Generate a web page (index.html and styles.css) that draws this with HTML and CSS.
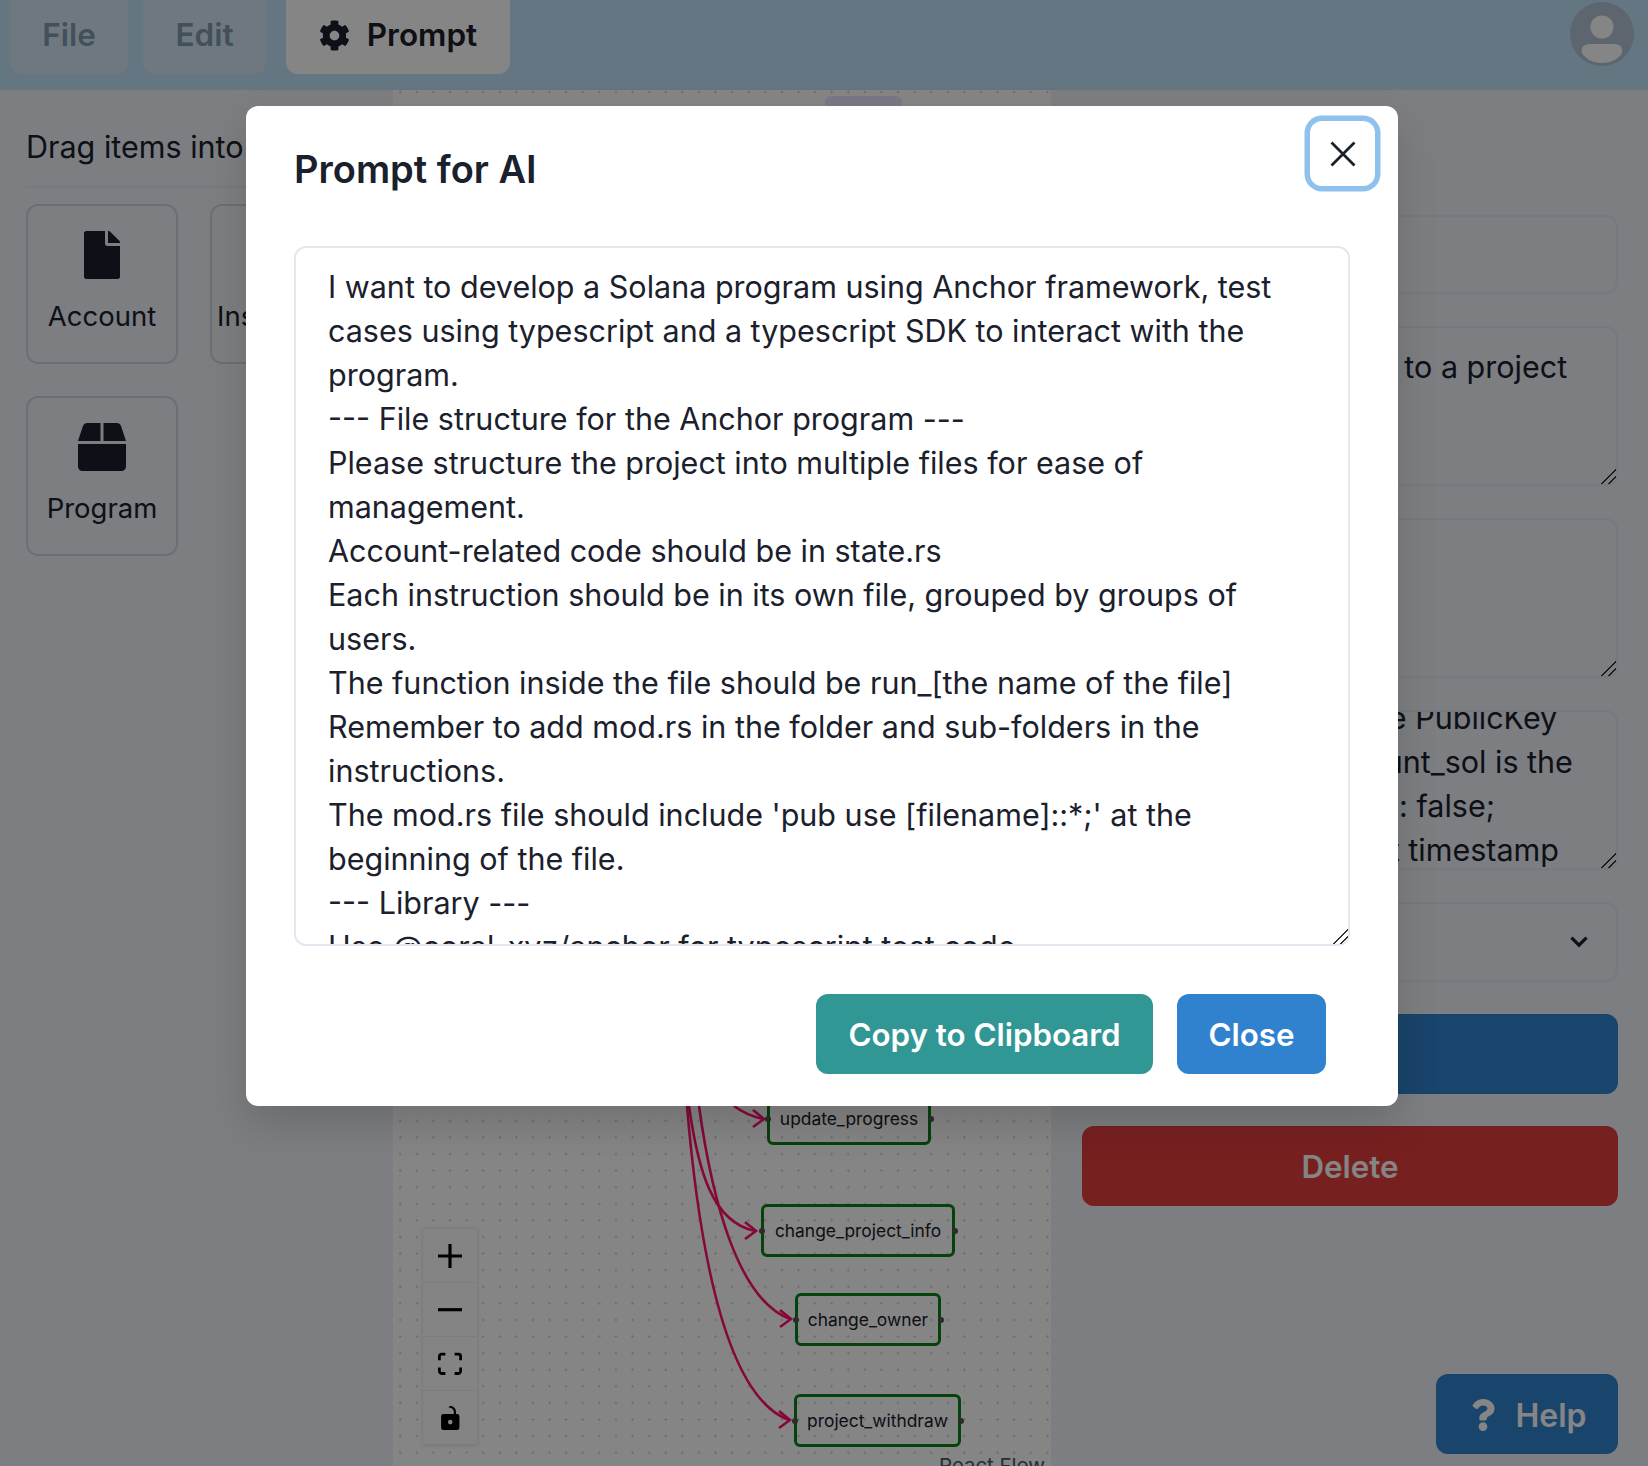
FILE: index.html
```html
<!DOCTYPE html>
<html lang="en">

<head>
  <meta charset="UTF-8">
  <meta name="viewport" content="width=device-width, initial-scale=1.0">
  <title>Prompt for AI</title>
  <link rel="stylesheet" href="styles.css">
</head>

<body>
  <div class="page">
    <header class="navbar">
      <div class="tabs">
        <div class="tab tab-file">File</div>
        <div class="tab tab-edit">Edit</div>
        <div class="tab tab-prompt">
          <svg class="cog" viewBox="0 0 512 512"><path d="M487.4 315.7l-42.6-24.6c4.3-23.2 4.3-47 0-70.2l42.6-24.6c4.9-2.8 7.1-8.6 5.5-14-11.1-35.6-30-67.8-54.7-94.6-3.8-4.1-10-5.1-14.8-2.3L380.8 110c-17.9-15.4-38.5-27.3-60.8-35.1V25.8c0-5.6-3.9-10.5-9.4-11.7-36.7-8.2-74.3-7.8-109.2 0-5.5 1.2-9.4 6.1-9.4 11.7V75c-22.2 7.9-42.8 19.8-60.8 35.1L88.7 85.5c-4.9-2.8-11-1.9-14.8 2.3-24.7 26.7-43.6 58.9-54.7 94.6-1.7 5.4.6 11.2 5.5 14L67.3 221c-4.3 23.2-4.3 47 0 70.2l-42.6 24.6c-4.9 2.8-7.1 8.6-5.5 14 11.1 35.6 30 67.8 54.7 94.6 3.8 4.1 10 5.1 14.8 2.3l42.6-24.6c17.9 15.4 38.5 27.3 60.8 35.1v49.2c0 5.6 3.9 10.5 9.4 11.7 36.7 8.2 74.3 7.8 109.2 0 5.5-1.2 9.4-6.1 9.4-11.7v-49.2c22.2-7.9 42.8-19.8 60.8-35.1l42.6 24.6c4.9 2.8 11 1.9 14.8-2.3 24.7-26.7 43.6-58.9 54.7-94.6 1.5-5.5-.7-11.3-5.6-14.1zM256 336c-44.1 0-80-35.9-80-80s35.9-80 80-80 80 35.9 80 80-35.9 80-80 80z"/></svg>
          <span>Prompt</span>
        </div>
      </div>
      <svg class="avatar" viewBox="0 0 64 64">
        <circle cx="32" cy="32" r="32" fill="#b2c3d4"/>
        <circle cx="32" cy="25" r="11.5" fill="#fff"/>
        <path d="M20 42h24c7 0 9 4 8 9-3 6-11 10-20 10s-17-4-20-10c-1-5 1-9 8-9z" fill="#fff"/>
      </svg>
    </header>

    <main class="workspace">
      <aside class="sidebar">
        <p class="sidebar-hint">Drag items into</p>
        <div class="palette">
          <div class="palette-item">
            <svg class="palette-icon icon-doc" viewBox="0 0 384 512"><path d="M224 136V0H24C10.7 0 0 10.7 0 24v464c0 13.3 10.7 24 24 24h336c13.3 0 24-10.7 24-24V160H248c-13.2 0-24-10.8-24-24zm160-14.1v6.1H256V0h6.1c6.4 0 12.5 2.5 17 7l97.9 98c4.5 4.5 7 10.6 7 16.9z"/></svg>
            <span>Account</span>
          </div>
          <div class="palette-item">
            <svg class="palette-icon icon-doc" viewBox="0 0 384 512"><path d="M224 136V0H24C10.7 0 0 10.7 0 24v464c0 13.3 10.7 24 24 24h336c13.3 0 24-10.7 24-24V160H248c-13.2 0-24-10.8-24-24z"/></svg>
            <span>Instruction</span>
          </div>
          <div class="palette-item">
            <svg class="palette-icon icon-box" viewBox="0 0 512 512"><path d="M509.5 184.6L458.9 32.8C452.4 13.2 434.1 0 413.4 0H272v192h238.7c-.4-2.5-.4-5-1.2-7.4zM240 0H98.6c-20.7 0-39 13.2-45.5 32.8L2.5 184.6c-.8 2.4-.8 4.9-1.2 7.4H240V0zM0 224v240c0 26.5 21.5 48 48 48h416c26.5 0 48-21.5 48-48V224H0z"/></svg>
            <span>Program</span>
          </div>
        </div>
      </aside>

      <section class="canvas">
        <div class="node-pill"></div>

        <svg class="edges" viewBox="393 90 658 1376">
          <g fill="none" stroke="#ff1070" stroke-width="2.6">
            <path d="M734 1106C742 1112 750 1116 763 1119"/>
            <path d="M753 1110L764 1119L753 1127"/>
            <path d="M689 1106C698 1170 712 1222 755 1231"/>
            <path d="M745 1222L756 1231L745 1239"/>
            <path d="M699 1106C712 1200 738 1300 790 1319"/>
            <path d="M780 1310L791 1319L780 1327"/>
            <path d="M687 1106C700 1260 728 1398 789 1420"/>
            <path d="M779 1411L790 1420L779 1428"/>
          </g>
        </svg>

        <div class="node node-update">update_progress</div>
        <div class="node node-info">change_project_info</div>
        <div class="node node-owner">change_owner</div>
        <div class="node node-withdraw">project_withdraw</div>

        <div class="controls">
          <div class="control"><svg class="ctl-plus" viewBox="0 0 32 32"><path d="M32 18.133H18.133V32h-4.266V18.133H0v-4.266h13.867V0h4.266v13.867H32z"/></svg></div>
          <div class="control"><svg class="ctl-minus" viewBox="0 0 32 5"><path d="M0 0h32v4.2H0z"/></svg></div>
          <div class="control"><svg class="ctl-fit" viewBox="0 0 32 30"><path d="M3.692 4.63c0-.53.4-.938.939-.938h5.215V0H4.708C2.13 0 0 2.054 0 4.63v5.216h3.692V4.63zM27.354 0h-5.2v3.692h5.17c.53 0 .984.4.984.939v5.215H32V4.631A4.624 4.624 0 0027.354 0zm.954 24.83c0 .532-.4.94-.939.94h-5.215v3.768h5.215c2.577 0 4.631-2.13 4.631-4.707v-5.139h-3.692v5.139zm-23.677.94c-.531 0-.939-.4-.939-.94v-5.138H0v5.139c0 2.577 2.13 4.707 4.708 4.707h5.138V25.77H4.631z"/></svg></div>
          <div class="control"><svg class="ctl-lock" viewBox="0 0 25 32"><path d="M21.333 10.667H19.81V7.619C19.81 3.429 16.38 0 12.19 0c-4.114 1.828-1.37 2.133.305 2.438 1.676.305 4.42 2.59 4.42 5.181v3.048H3.047A3.056 3.056 0 000 13.714v15.238A3.056 3.056 0 003.048 32h18.285a3.056 3.056 0 003.048-3.048V13.714a3.056 3.056 0 00-3.048-3.047zM12.19 24.533a3.056 3.056 0 01-3.047-3.047 3.056 3.056 0 013.047-3.048 3.056 3.056 0 013.048 3.048 3.056 3.056 0 01-3.048 3.047z"/></svg></div>
        </div>

        <div class="attribution">React Flow</div>
      </section>

      <aside class="panel">
        <div class="field field-short"></div>
        <div class="field field-area">
          <div class="area-text nowrap"><span class="line-shift">Let user contribute to a project</span></div>
        </div>
        <div class="field field-area"></div>
        <div class="field field-area">
          <div class="area-text area-scrolled">
            <div class="nowrap line-shift">Let a signer use the PublicKey</div>
            <div class="nowrap">And the value amount_sol is the</div>
            <div class="nowrap line-shift">Set flag withdrawal: false;</div>
            <div class="nowrap">Then stores current timestamp</div>
          </div>
        </div>
        <div class="field field-short field-select">
          <svg class="chevron" viewBox="0 0 24 24"><path d="M5 8l7 7 7-7" fill="none" stroke="#1a202c" stroke-width="3"/></svg>
        </div>
        <button class="btn btn-save">Save</button>
        <button class="btn btn-delete">Delete</button>
      </aside>
    </main>

    <button class="btn btn-help">
      <svg class="help-icon" viewBox="0 0 384 512"><path d="M202.021 0C122.202 0 70.503 32.703 29.914 91.026c-7.363 10.58-5.093 25.086 5.178 32.874l43.138 32.709c10.373 7.865 25.132 6.026 33.253-4.148 25.049-31.381 43.63-49.449 82.757-49.449 30.764 0 68.816 19.799 68.816 49.631 0 22.552-18.617 34.134-48.993 51.164-35.423 19.86-82.299 44.576-82.299 106.405V320c0 13.255 10.745 24 24 24h72.471c13.255 0 24-10.745 24-24v-5.773c0-42.86 125.268-44.645 125.268-160.627C377.504 66.256 286.902 0 202.021 0zM192 373.459c-38.196 0-69.271 31.075-69.271 69.271 0 38.195 31.075 69.27 69.271 69.27s69.271-31.075 69.271-69.271-31.075-69.27-69.271-69.27z"/></svg>
      <span>Help</span>
    </button>

    <div class="overlay">
      <div class="modal">
        <div class="modal-header">
          <h2 class="modal-title">Prompt for AI</h2>
          <div class="modal-close">
            <svg viewBox="0 0 26 26"><path d="M1.5 1.5L24.5 24.5M24.5 1.5L1.5 24.5" fill="none" stroke="#1a202c" stroke-width="2.8"/></svg>
          </div>
        </div>
        <textarea class="prompt-box" readonly>I want to develop a Solana program using Anchor framework, test cases using typescript and a typescript SDK to interact with the program.
--- File structure for the Anchor program ---
Please structure the project into multiple files for ease of management.
Account-related code should be in state.rs
Each instruction should be in its own file, grouped by groups of users.
The function inside the file should be run_[the name of the file]
Remember to add mod.rs in the folder and sub-folders in the instructions.
The mod.rs file should include 'pub use [filename]::*;' at the beginning of the file.
--- Library ---
Use @coral-xyz/anchor for typescript test code</textarea>
        <div class="modal-footer">
          <button class="btn btn-copy">Copy to Clipboard</button>
          <button class="btn btn-close">Close</button>
        </div>
      </div>
    </div>
  </div>
</body>

</html>
```

FILE: styles.css
```css
* {
  padding: 0;
  margin: 0;
  box-sizing: border-box;
}

body {
  font-family: Inter, "Liberation Sans", sans-serif;
  font-size: 30.5px;
  line-height: 44px;
  color: #1a202c;
  background-color: #edf2f7;
}

.page {
  position: relative;
  width: 1648px;
  height: 1466px;
  overflow: hidden;
}

/* top bar */
.navbar {
  height: 90px;
  display: flex;
  justify-content: space-between;
  padding: 0 14px 0 10px;
  background-color: #bee3f8;
  border-bottom: 1px solid #d2dce4;
}

.tabs {
  display: flex;
}

.tab {
  height: 74px;
  padding-bottom: 4px;
  display: flex;
  align-items: center;
  justify-content: center;
  font-size: 31.5px;
  font-weight: 600;
  color: #7f9aae;
  background-color: #d5e6f3;
  border-radius: 0 0 12px 12px;
}

.tab-file {
  width: 118px;
  margin-right: 15px;
}

.tab-edit {
  width: 123px;
  margin-right: 20px;
}

.tab-prompt {
  width: 224px;
  gap: 17px;
  color: #1a202c;
  background-color: #fff;
}

.cog {
  width: 31px;
  height: 31px;
  fill: #1a202c;
}

.avatar {
  width: 64px;
  height: 64px;
  margin-top: 2px;
}

/* three columns */
.workspace {
  display: flex;
  height: 1376px;
}

.sidebar {
  width: 393px;
  padding: 35px 0 0 26px;
  overflow: hidden;
}

.sidebar-hint {
  white-space: nowrap;
  padding-bottom: 17px;
  border-bottom: 2px solid #e2e8f0;
  margin-bottom: 16px;
}

.palette {
  display: grid;
  grid-template-columns: 152px 152px;
  grid-auto-rows: 160px;
  gap: 32px;
}

.palette-item {
  display: flex;
  flex-direction: column;
  align-items: center;
  border: 2px solid #cbd5e0;
  border-radius: 12px;
  font-size: 27.5px;
  line-height: 40px;
}

.palette-icon {
  fill: #1a202c;
  margin-top: 25px;
  margin-bottom: 17px;
  height: 48px;
}

.icon-doc {
  width: 36px;
}

.icon-box {
  width: 48px;
}

.canvas {
  position: relative;
  width: 658px;
  background-color: #fff;
  background-image: radial-gradient(circle, #d4d4d4 1px, transparent 1.3px);
  background-size: 16.6px 16.6px;
  background-position: 15.5px -6.3px;
  overflow: hidden;
}

.node-pill {
  position: absolute;
  left: 432px;
  top: 6px;
  width: 77px;
  height: 40px;
  background-color: #ebe7ff;
  border-radius: 6px;
}

.edges {
  position: absolute;
  left: 0;
  top: 0;
  width: 658px;
  height: 1376px;
}

.node {
  position: absolute;
  height: 53px;
  display: flex;
  align-items: center;
  justify-content: center;
  font-size: 17.4px;
  line-height: 24px;
  border: 3px solid #0a7f18;
  border-radius: 6px;
}

.node::before,
.node::after {
  content: "";
  position: absolute;
  top: 50%;
  width: 6px;
  height: 6px;
  margin-top: -3px;
  border-radius: 50%;
  background-color: #555;
}

.node::before {
  left: -5px;
}

.node::after {
  right: -6px;
}

.node-update {
  left: 374px;
  top: 1002px;
  width: 164px;
}

.node-info {
  left: 368px;
  top: 1114px;
  width: 194px;
}

.node-owner {
  left: 402px;
  top: 1203px;
  width: 146px;
}

.node-withdraw {
  left: 401px;
  top: 1304px;
  width: 167px;
}

.controls {
  position: absolute;
  left: 30px;
  top: 1139px;
  width: 54px;
  box-shadow: 0 0 4px rgba(0, 0, 0, .15);
  background-color: #fefefe;
}

.control {
  height: 54px;
  display: flex;
  align-items: center;
  justify-content: center;
  border-bottom: 1px solid #eee;
}

.control svg {
  fill: #000;
}

.ctl-plus,
.ctl-fit {
  width: 24px;
  height: 24px;
}

.ctl-minus {
  width: 24px;
  height: 4px;
}

.ctl-lock {
  width: 19px;
  height: 24px;
}

.attribution {
  position: absolute;
  right: 6px;
  top: 1364px;
  font-size: 20.4px;
  line-height: 24px;
  color: #4a5568;
}

/* right column */
.panel {
  flex: 1;
  display: flex;
  flex-direction: column;
  gap: 32px;
  padding: 125px 30px 0 31px;
}

.field {
  border: 2px solid #e2e8f0;
  border-radius: 12px;
}

.field-short {
  height: 79px;
}

.field-area {
  height: 160px;
  overflow: hidden;
  resize: vertical;
}

.field-area::-webkit-resizer,
.prompt-box::-webkit-resizer {
  background: linear-gradient(135deg, transparent 0 47%, #333 47% 54%, transparent 54% 72%, #333 72% 79%, transparent 79%);
}

.area-text {
  padding: 17px 0 0 32px;
}

.area-scrolled {
  margin-top: -33px;
}

.nowrap {
  white-space: nowrap;
}

.line-shift {
  padding-left: 7px;
}

.field-select {
  height: 80px;
  display: flex;
  align-items: center;
  justify-content: flex-end;
  padding-right: 24px;
}

.chevron {
  width: 26px;
  height: 26px;
}

.btn {
  border: 0;
  height: 80px;
  padding-top: 2px;
  border-radius: 12px;
  font-family: inherit;
  font-size: 31.3px;
  font-weight: 600;
  color: #fff;
}

.btn-save {
  background-color: #3182ce;
}

.btn-delete {
  background-color: #e53e3e;
}

.btn-help {
  position: absolute;
  right: 30px;
  bottom: 12px;
  width: 182px;
  padding-left: 4px;
  display: flex;
  align-items: center;
  justify-content: center;
  gap: 20px;
  font-size: 32px;
  background-color: #3182ce;
}

.help-icon {
  width: 24px;
  height: 34px;
  fill: #fff;
}

/* modal */
.overlay {
  position: absolute;
  left: 0;
  top: 0;
  width: 100%;
  height: 100%;
  background-color: rgba(0, 0, 0, .48);
  display: flex;
  justify-content: center;
  align-items: flex-start;
  padding: 106px 4px 0 0;
}

.modal {
  width: 1152px;
  height: 1000px;
  background-color: #fff;
  border-radius: 12px;
  box-shadow: 0 18px 40px rgba(0, 0, 0, .15);
  padding: 0 48px;
}

.modal-header {
  position: relative;
  height: 140px;
  padding-top: 33px;
}

.modal-title {
  font-size: 38px;
  line-height: 60px;
  font-weight: 600;
}

.modal-close {
  position: absolute;
  left: 1016px;
  top: 15px;
  width: 65px;
  height: 65px;
  border-radius: 12px;
  box-shadow: 0 0 0 5.5px rgba(66, 153, 225, .6);
  display: flex;
  align-items: center;
  justify-content: center;
}

.modal-close svg {
  width: 26px;
  height: 26px;
}

.prompt-box {
  display: block;
  width: 100%;
  height: 700px;
  padding: 17px 32px 0;
  border: 2px solid #e2e8f0;
  border-radius: 12px;
  font-family: inherit;
  font-size: 30.5px;
  line-height: 44px;
  color: #1a202c;
  overflow: hidden;
  outline: none;
}

.modal-footer {
  display: flex;
  justify-content: flex-end;
  gap: 24px;
  margin-top: 48px;
  padding-right: 24px;
}

.btn-copy {
  width: 337px;
  background-color: #319795;
}

.btn-close {
  width: 149px;
  background-color: #3182ce;
}
```
